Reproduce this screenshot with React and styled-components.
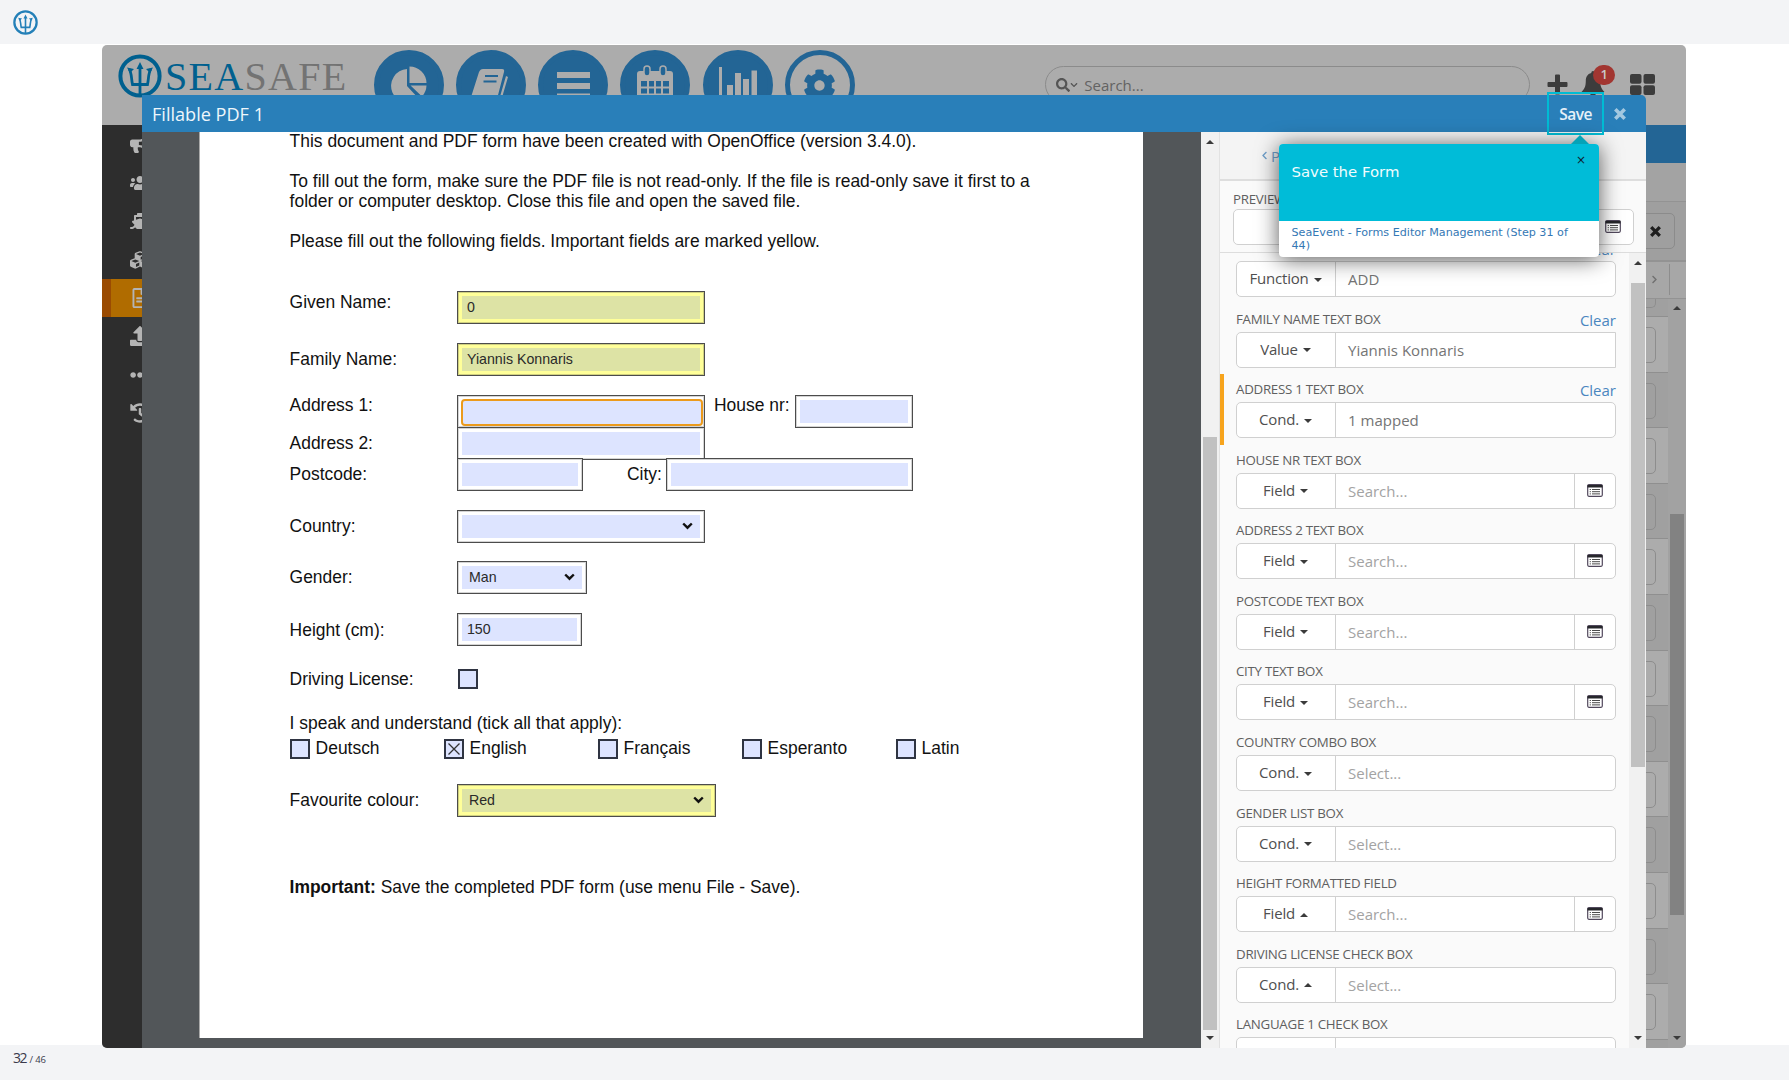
import React from "react";
import styled, { createGlobalStyle } from "styled-components";
import {
  FaBullhorn,
  FaChevronDown,
  FaChevronLeft,
  FaChevronRight,
  FaCog,
  FaCubes,
  FaEllipsisH,
  FaHistory,
  FaRegFileAlt,
  FaSearch,
  FaShip,
  FaUpload,
  FaUsers,
} from "react-icons/fa";

const GlobalStyle = createGlobalStyle`
  * {
    box-sizing: border-box;
  }
  body {
    margin: 0;
    background: #fff;
    font-family: "Open Sans", "Noto Sans", sans-serif;
  }
  p {
    margin: 0;
  }
  svg {
    display: block;
  }
`;

const Page = styled.div`
  display: flex;
  flex-direction: column;
  width: 1789px;
  height: 1080px;
  overflow: hidden;
`;
const TopBar = styled.header`
  flex: none;
  height: 44px;
  padding: 10px 13px;
  background: #f3f4f6;
`;
const BottomBar = styled.footer`
  flex: none;
  height: 35px;
  padding: 3px 13px;
  background: #f3f4f6;
  color: #3a3a4c;
  font-size: 14px;
  line-height: 20px;
  letter-spacing: -1.4px;
  small {
    margin-left: 1px;
    font-size: 9.5px;
    letter-spacing: -0.1px;
  }
`;
const Middle = styled.main`
  flex: none;
  height: 1001px;
  padding: 1px 103px 0 102px;
`;
const Stage = styled.div`
  position: relative;
  z-index: 1;
  height: 1003px;
  border-radius: 5px;
  overflow: hidden;
  background: #acacac;
`;

/* application behind the modal */
const AppHeader = styled.div`
  display: flex;
  height: 80px;
  padding: 5px 0 0 16px;
  overflow: hidden;
`;
const Logo = styled.div`
  display: flex;
  flex: none;
  width: 255.5px;
  padding-top: 4px;
  font-family: "Liberation Serif", serif;
  font-size: 40px;
  line-height: 46px;
  letter-spacing: 1.3px;
  color: #737373;
  span {
    color: #00608f;
  }
  svg {
    flex: none;
    margin-right: 3px;
  }
`;
const NavCircle = styled.div`
  display: flex;
  flex: none;
  align-items: center;
  justify-content: center;
  width: 70px;
  height: 70px;
  margin-right: 12.3px;
  border-radius: 50%;
  border: 5px solid #236595;
  background: ${props => (props.$active ? "#acacac" : "#236595")};
  color: ${props => (props.$active ? "#236595" : "#acacac")};
`;
const SearchBox = styled.div`
  display: flex;
  flex: none;
  align-items: center;
  width: 485px;
  height: 37px;
  margin: 16px 17px 0 178px;
  padding-left: 10px;
  border: 1.5px solid #8b8b8b;
  border-radius: 19px;
  color: #555;
  font-size: 15px;
  span {
    margin-left: 6px;
    color: #636363;
    letter-spacing: 0;
  }
`;
const HeaderIcons = styled.div`
  display: flex;
  align-items: flex-start;
  padding-top: 24px;
  color: #3c3c3c;
`;
const BellWrap = styled.div`
  position: relative;
  margin: -3px 25px 0 13px;
`;
const Badge = styled.span`
  position: absolute;
  top: -6px;
  left: 12px;
  width: 22px;
  height: 20px;
  border-radius: 10px;
  background: #a23631;
  color: #c9c9c9;
  font-size: 13px;
  font-weight: 600;
  line-height: 19px;
  text-align: center;
`;
const AppBody = styled.div`
  display: flex;
  height: 923px;
`;
const Sidebar = styled.div`
  flex: none;
  width: 67px;
  background: #2d2d2d;
`;
const SideItem = styled.div`
  display: flex;
  align-items: center;
  justify-content: center;
  height: 38.45px;
  border-left: 9px solid ${props => (props.$active ? "#9a4b02" : "#2d2d2d")};
  background: ${props => (props.$active ? "#b06c00" : "#2d2d2d")};
  color: #b4b4b4;
  font-size: 20px;
`;
const AppMain = styled.div`
  flex: 1;
  display: flex;
  flex-direction: column;
`;
const BlueBar = styled.div`
  flex: none;
  height: 38px;
  background: #236595;
`;
const ToolStrip = styled.div`
  flex: none;
  display: flex;
  justify-content: flex-end;
  height: ${props => props.$height}px;
  padding: ${props => props.$pad || "0"};
  border-bottom: ${props => props.$line || 1}px solid #939393;
  background: ${props => props.$bg};
  color: #1f1f1f;
`;
const ClearButton = styled.div`
  display: flex;
  align-items: center;
  justify-content: flex-end;
  width: 120px;
  height: 36px;
  padding-right: 13px;
  border: 1px solid #8b8b8b;
  border-radius: 5px;
`;
const NextCell = styled.div`
  display: flex;
  align-items: center;
  height: 31px;
  padding-right: 10px;
  border-right: 1px solid #8d8d8d;
  color: #707070;
`;
const ListArea = styled.div`
  flex: 1;
  display: flex;
  min-height: 0;
`;
const Rows = styled.div`
  flex: 1;
  overflow: hidden;
`;
const Row = styled.div`
  display: flex;
  justify-content: flex-end;
  height: ${props => props.$height || 55.6}px;
  padding: ${props => (props.$height ? "0" : "10px")} 12px 0 0;
  border-bottom: 1px solid #8f8f8f;
  background: ${props => (props.$odd ? "#a0a0a0" : "#acacac")};
`;
const RowButton = styled.div`
  width: 60px;
  height: ${props => (props.$cut ? 9 : 36)}px;
  border: 1px solid #8d8d8d;
  border-top-width: ${props => (props.$cut ? 0 : 1)}px;
  border-radius: ${props => (props.$cut ? "0 0 5px 5px" : "5px")};
`;

const ScrollBar = styled.div`
  flex: none;
  display: flex;
  flex-direction: column;
  align-items: center;
  width: ${props => props.$width}px;
  padding: ${props => props.$pad};
  background: ${props => props.$bg};
`;
const Thumb = styled.div`
  width: 14px;
  height: ${props => props.$height}px;
  margin: ${props => props.$before}px 0 auto;
  background: ${props => props.$color};
`;
const Arrow = styled.i`
  display: inline-block;
  width: 0;
  height: 0;
  border: 4px solid transparent;
  border-${props => (props.$up ? "bottom" : "top")}-color: #3b3b3b;
  border-${props => (props.$up ? "top" : "bottom")}-width: 0;
`;

/* modal */
const Modal = styled.div`
  position: absolute;
  top: 50px;
  left: 40px;
  display: flex;
  flex-direction: column;
  width: 1504px;
  height: 953px;
  border-top-right-radius: 5px;
  overflow: hidden;
`;
const ModalHeader = styled.div`
  flex: none;
  display: flex;
  align-items: center;
  justify-content: space-between;
  height: 37px;
  padding: 0 20px 0 10px;
  background: #297fb9;
  color: #eef6fb;
  line-height: 36px;
  h3 {
    margin: 0;
    font-size: 18.1px;
    font-weight: 400;
  }
`;
const HeaderActions = styled.div`
  display: flex;
  align-items: center;
  color: #a3c8e0;
  b {
    margin-right: 22px;
    color: #e6f1f8;
    font-size: 15.5px;
    font-weight: 600;
    letter-spacing: -0.5px;
  }
`;
const ModalBody = styled.div`
  flex: 1;
  display: flex;
  min-height: 0;
`;
const Viewer = styled.div`
  flex: none;
  width: 1059px;
  padding: 0 58px 10px 57px;
  background: #525659;
`;
const Sheet = styled.div`
  display: flex;
  flex-direction: column;
  height: 906px;
  padding-left: 89.6px;
  border-left: 1px solid #aaa;
  background: #fff;
  color: #111;
  font-family: "Liberation Sans", Arial, sans-serif;
  font-size: 17.44px;
  line-height: 20px;
`;
const Text = styled.p`
  flex: none;
  margin-top: ${props => props.$top}px;
  white-space: pre;
`;
const FormRow = styled.div`
  flex: none;
  display: flex;
  height: ${props => props.$height || 33}px;
  margin-top: ${props => props.$top}px;
`;
const Label = styled.div`
  flex: none;
  width: ${props => props.$width || 167.4}px;
  padding-top: ${props => props.$drop || 6}px;
  margin-left: ${props => props.$gap || 0}px;
`;
const Box = styled.div`
  flex: none;
  position: relative;
  width: ${props => props.$width}px;
  height: 33px;
  padding: 4px;
  border: 1px solid #4c4c4c;
  box-shadow: inset 0 0 0 1px ${props => (props.$required ? "#cfcf80" : "#d4d4d4")};
  background: ${props => (props.$required ? "#ffff99" : "#fff")};
`;
const Fill = styled.div`
  display: flex;
  align-items: center;
  justify-content: space-between;
  height: 23px;
  padding: 0 7px 1px ${props => props.$indent || 5}px;
  background: ${props => (props.$required ? "#dde3a5" : "#dde4ff")};
  outline: ${props => (props.$focus ? "2px solid #eb9a1c" : "none")};
  border-radius: ${props => (props.$focus ? 2 : 0)}px;
  transform: ${props => (props.$focus ? "translate(1px, 1px)" : "none")};
  color: #2a2a2a;
  font-size: 14.2px;
`;
const Languages = styled.div`
  flex: none;
  display: grid;
  grid-template-columns: 154px 154px 144px 154px 1fr;
  margin-top: 6px;
  line-height: 19px;
`;
const Check = styled.div`
  display: flex;
  gap: 6px;
`;
const Tick = styled.span`
  flex: none;
  width: 20px;
  height: 20px;
  border: 2px solid #2f3442;
  background: #dde4ff;
`;

/* mapping panel */
const Panel = styled.div`
  flex: 1;
  display: flex;
  flex-direction: column;
  min-width: 0;
  border-left: 1px solid #e2e2e2;
  background: #fafafa;
  overflow: hidden;
`;
const BackBar = styled.div`
  flex: none;
  display: flex;
  align-items: center;
  gap: 2px;
  height: 49px;
  padding-left: 40px;
  border-bottom: 2px solid #dedede;
  background: #f4f4f4;
  color: #6f9fca;
  font-size: 15px;
`;
const Preview = styled.div`
  flex: none;
  height: 72px;
  padding: 7px 12px 0 13px;
  border-bottom: 1px solid #ddd;
  background: #fafafa;
`;
const FieldLabel = styled.div`
  display: flex;
  justify-content: space-between;
  height: ${props => props.$height || 24}px;
  color: #606060;
  font-size: 13.3px;
  line-height: 22px;
  letter-spacing: -0.27px;
  text-transform: uppercase;
`;
const ClearLink = styled.span`
  color: #4a86bf;
  font-size: 15px;
  line-height: 24px;
  letter-spacing: 0;
  text-transform: none;
`;
const InputGroup = styled.div`
  display: flex;
  height: 36px;
  border: 1px solid #d0d0d0;
  border-radius: ${props => (props.$square ? "5px 0 0 5px" : "5px")};
  background: #fff;
  font-size: 15px;
`;
const Mode = styled.div`
  display: flex;
  flex: none;
  align-items: center;
  justify-content: center;
  gap: 5px;
  width: 99px;
  padding: 0 1px 2px 0;
  border-right: 1px solid #d0d0d0;
  color: #4f4f4f;
  letter-spacing: -0.2px;
  i {
    margin-top: 3px;
  }
`;
const Value = styled.div`
  flex: 1;
  padding-left: 12px;
  color: ${props => (props.$muted ? "#a3a3a3" : "#747474")};
  line-height: 34px;
  letter-spacing: ${props => (props.$muted ? "0" : "0.02px")};
`;
const Picker = styled.div`
  display: flex;
  flex: none;
  align-items: center;
  justify-content: center;
  width: 41px;
  padding-bottom: 1px;
  border-left: ${props => (props.$plain ? 0 : 1)}px solid #d0d0d0;
`;
const Mapping = styled.div`
  flex: 1;
  display: flex;
  min-height: 0;
`;
const MappingList = styled.div`
  flex: 1;
  overflow: hidden;
  > div:first-child {
    margin-top: -19.9px;
  }
`;
const Item = styled.div`
  height: 70.57px;
  padding: 4px 13px 0 12px;
  border-left: 4px solid ${props => (props.$active ? "#f7a41d" : "transparent")};
`;

/* guide step */
const Highlight = styled.div`
  position: absolute;
  top: 47px;
  left: 1445px;
  width: 57px;
  height: 43px;
  border: 2px solid #00bcd4;
`;
const Tip = styled.div`
  position: absolute;
  top: 99px;
  left: 1176.5px;
  width: 320.5px;
  border-radius: 4px;
  background: #fff;
  box-shadow: 0 2px 22px rgba(0, 0, 0, 0.65);
  font-family: "DejaVu Sans", sans-serif;
  &::before {
    content: "";
    position: absolute;
    top: -9px;
    right: 10px;
    border: 9px solid transparent;
    border-top-width: 0;
    border-bottom-color: #05a3b7;
  }
`;
const TipBody = styled.div`
  display: flex;
  justify-content: space-between;
  height: 77px;
  padding: 18px 13px 0 13px;
  border-radius: 4px 4px 0 0;
  background: #00bcd8;
  color: #f0fcfe;
  font-size: 14.9px;
  line-height: 20px;
  span {
    margin-top: -12px;
    color: #123;
    font-size: 12px;
  }
`;
const TipFooter = styled.div`
  height: 36px;
  padding: 5px 13px 0;
  color: #3478b5;
  font-size: 11.15px;
  line-height: 13px;
`;

const Trident = ({ size, color }) => (
  <svg width={size} height={size} viewBox="0 0 44 44" fill="none" stroke={color}>
    <circle cx="22" cy="22" r="19.6" strokeWidth="4" />
    <path d="M22 13v29M11 15c3 4 2 9 3.500 15.500h15C31 24 30 19 33 15" strokeWidth="2.800" />
    <path d="M22 8l-3.500 7h7zM9 13.500l7 1.500-4 4zM35 13.500L28 15l4 4z" fill={color} stroke="none" />
  </svg>
);

const PieIcon = () => (
  <svg width="40" height="40" viewBox="0 0 40 40" fill="currentColor">
    <path d="M18 4v17l12 13A17 17 0 1 1 18 4z" />
    <path d="M20.500 1.500A17 17 0 0 1 37.500 18h-17zM21.500 20.500h16a17 17 0 0 1-4.500 11z" />
  </svg>
);
const BookIcon = () => (
  <svg width="40" height="38" viewBox="0 0 40 38" fill="currentColor">
    <path d="M12 3h19c2 0 2.500 1 2 3l-7 27H4c-3 0-4-2-3-5L8 6c1-2 2-3 4-3z" />
    <path d="M35 10l2 1-7 24-18 1 16-2z" />
    <path d="M14 10h13M12.500 15.500h13" stroke="#236595" strokeWidth="2" />
  </svg>
);
const BarsIcon = () => (
  <svg width="33" height="28" viewBox="0 0 33 28" fill="currentColor">
    <path d="M0 1h33v6H0zM0 12h33v6H0zM0 22.500h33V28H0z" />
  </svg>
);
const CalendarIcon = () => (
  <svg width="36" height="40" viewBox="0 0 36 40">
    <rect y="6" width="36" height="34" rx="3" fill="currentColor" />
    <path d="M4 16h28v20H4z" fill="#236595" />
    <path d="M11 15v21M18 15v21M25 15v21M3 22.500h30M3 29.500h30" stroke="currentColor" strokeWidth="2" />
    <rect x="7" y="1" width="6" height="10" rx="3" fill="#236595" stroke="currentColor" strokeWidth="1.500" />
    <rect x="23" y="1" width="6" height="10" rx="3" fill="#236595" stroke="currentColor" strokeWidth="1.500" />
  </svg>
);
const ChartIcon = () => (
  <svg width="40" height="40" viewBox="0 0 40 40" fill="currentColor">
    <path d="M1 2h3v33h35v3H1zM9 20h6v13H9zM17 8h6v25h-6zM25 14h6v19h-6zM33.500 5.500h5.500v27.500h-5.500z" />
  </svg>
);
const PlusIcon = () => (
  <svg width="21" height="21" viewBox="0 0 21 21" fill="currentColor">
    <path d="M8 1.500Q8 .5 9 .5h3q1 0 1 1V8h6.500q1 0 1 1v3q0 1-1 1H13v6.500q0 1-1 1H9q-1 0-1-1V13H1.500q-1 0-1-1V9q0-1 1-1H8z" />
  </svg>
);
const BellIcon = () => (
  <svg width="24" height="26" viewBox="0 0 24 26" fill="currentColor">
    <path d="M12 0c1 0 1.800.8 1.700 2 4 1 5.500 4 5.500 8 0 6 1.800 8.500 4.300 11H.5C3 18.500 4.800 16 4.800 10c0-4 1.500-7 5.500-8C10.200.8 11 0 12 0zM9 22h6c0 4-6 4-6 0z" />
  </svg>
);
const TilesIcon = () => (
  <svg width="25" height="21" viewBox="0 0 25 21" fill="currentColor">
    <rect width="11.500" height="9.800" rx="2" />
    <rect x="13.500" width="11.500" height="9.800" rx="2" />
    <rect y="11.200" width="11.500" height="9.800" rx="2" />
    <rect x="13.500" y="11.200" width="11.500" height="9.800" rx="2" />
  </svg>
);
const CrossIcon = ({ size }) => (
  <svg width={size} height={size} viewBox="0 0 12 12" stroke="currentColor" strokeWidth="3.600">
    <path d="M1.300 1.300l9.400 9.400M10.700 1.300l-9.400 9.400" />
  </svg>
);
const ListIcon = () => (
  <svg width="16" height="13" viewBox="0 0 16 13">
    <rect x="0.700" y="0.700" width="14.600" height="11.600" rx="1.200" fill="#fff" stroke="#51485c" strokeWidth="1.200" />
    <path d="M0.500 1h15v2.500h-15z" fill="#26262b" />
    <path d="M5 5.500h8M5 7.700h8M5 9.900h8" stroke="#4a4a4a" />
    <path d="M2.700 5.500h1.200M2.700 7.700h1.200M2.700 9.900h1.200" stroke="#4a4a4a" />
  </svg>
);
const Caret = () => (
  <svg width="11" height="8" viewBox="0 0 11 8" fill="none" stroke="#111" strokeWidth="2.400">
    <path d="M1.200 1.500l4.300 4.200 4.300-4.200" />
  </svg>
);

const sideIcons = [FaBullhorn, FaUsers, FaShip, FaCubes, FaRegFileAlt, FaUpload, FaEllipsisH, FaHistory];

const languages = ["Deutsch", "English", "Français", "Esperanto", "Latin"];

const mappings = [
  { label: "Given Name Text Box", mode: "Function", value: "ADD", clear: true },
  { label: "Family Name Text Box", mode: "Value", value: "Yiannis Konnaris", clear: true },
  { label: "Address 1 Text Box", mode: "Cond.", value: "1 mapped", clear: true, active: true },
  { label: "House nr Text Box", mode: "Field" },
  { label: "Address 2 Text Box", mode: "Field" },
  { label: "Postcode Text Box", mode: "Field" },
  { label: "City Text Box", mode: "Field" },
  { label: "Country Combo Box", mode: "Cond." },
  { label: "Gender List Box", mode: "Cond." },
  { label: "Height Formatted Field", mode: "Field", up: true },
  { label: "Driving License Check Box", mode: "Cond.", up: true },
  { label: "Language 1 Check Box", mode: "", up: true },
];

const Field = ({ width, value, required, select, focus }) => (
  <Box $width={width} $required={required}>
    <Fill $required={required} $focus={focus} $indent={select ? 7 : 5}>
      <span>{value}</span>
      {select && <Caret />}
    </Fill>
  </Box>
);

const PdfForm = () => (
  <Sheet>
    <Text $top={-1}>This document and PDF form have been created with OpenOffice (version 3.4.0).</Text>
    <Text $top={20}>
      {"To fill out the form, make sure the PDF file is not read-only. If the file is read-only save it first to a\nfolder or computer desktop. Close this file and open the saved file."}
    </Text>
    <Text $top={20}>Please fill out the following fields. Important fields are marked yellow.</Text>
    <FormRow $top={40}>
      <Label $drop={1}>Given Name:</Label>
      <Field width={248} value="0" required />
    </FormRow>
    <FormRow $top={19}>
      <Label $drop={6}>Family Name:</Label>
      <Field width={248} value="Yiannis Konnaris" required />
    </FormRow>
    <FormRow $top={19}>
      <Label $drop={0.4}>Address 1:</Label>
      <Field width={248} focus />
      <Label $drop={0.4} $gap={9} $width={81}>House nr:</Label>
      <Field width={118} />
    </FormRow>
    <FormRow $top={-1}>
      <Label>Address 2:</Label>
      <Field width={248} />
    </FormRow>
    <FormRow $top={-2}>
      <Label $drop={6.4}>Postcode:</Label>
      <Field width={126} />
      <Label $drop={6.4} $gap={44} $width={39}>City:</Label>
      <Field width={247} />
    </FormRow>
    <FormRow $top={19}>
      <Label $drop={6}>Country:</Label>
      <Field width={248} select />
    </FormRow>
    <FormRow $top={18}>
      <Label>Gender:</Label>
      <Field width={130} value="Man" select />
    </FormRow>
    <FormRow $top={19}>
      <Label $drop={7}>Height (cm):</Label>
      <Field width={125} value="150" />
    </FormRow>
    <FormRow $top={23} $height={19}>
      <Label $width={168.4} $drop={0.1}>Driving License:</Label>
      <Tick />
    </FormRow>
    <Text $top={25}>I speak and understand (tick all that apply):</Text>
    <Languages>
      {languages.map(name => (
        <Check key={name}>
          <Tick>
            {name === "English" && (
              <svg width="16" height="16" viewBox="0 0 16 16" stroke="#333" strokeWidth="1.300">
                <path d="M2.500 2.500l11 11M13.500 2.500l-11 11" />
              </svg>
            )}
          </Tick>
          {name}
        </Check>
      ))}
    </Languages>
    <FormRow $top={25}>
      <Label>Favourite colour:</Label>
      <Field width={259} value="Red" required select />
    </FormRow>
    <Text $top={60}>
      <b>Important:</b> Save the completed PDF form (use menu File - Save).
    </Text>
  </Sheet>
);

const MappingItem = ({ item }) => (
  <Item $active={item.active}>
    <FieldLabel>
      {item.label}
      {item.clear && <ClearLink>Clear</ClearLink>}
    </FieldLabel>
    <InputGroup $square={item.mode === "Value"}>
      <Mode>
        {item.mode}
        {item.mode && <Arrow $up={item.up} />}
      </Mode>
      <Value $muted={!item.value}>
        {item.value || (item.mode === "Field" && "Search...") || (item.mode && "Select...")}
      </Value>
      {item.mode === "Field" && (
        <Picker>
          <ListIcon />
        </Picker>
      )}
    </InputGroup>
  </Item>
);

const Background = () => (
  <>
    <AppHeader>
      <Logo>
        <Trident size={44} color="#00608f" />
        <div>
          <span>SEA</span>SAFE
        </div>
      </Logo>
      <NavCircle><PieIcon /></NavCircle>
      <NavCircle><BookIcon /></NavCircle>
      <NavCircle><BarsIcon /></NavCircle>
      <NavCircle><CalendarIcon /></NavCircle>
      <NavCircle><ChartIcon /></NavCircle>
      <NavCircle $active><FaCog size={33} /></NavCircle>
      <SearchBox>
        <FaSearch size={14} />
        <FaChevronDown size={8} />
        <span>Search...</span>
      </SearchBox>
      <HeaderIcons>
        <PlusIcon />
        <BellWrap>
          <BellIcon />
          <Badge>1</Badge>
        </BellWrap>
        <TilesIcon />
      </HeaderIcons>
    </AppHeader>
    <AppBody>
      <Sidebar>
        {sideIcons.map((Icon, i) => (
          <SideItem key={i} $active={i === 4}>
            <Icon />
          </SideItem>
        ))}
      </Sidebar>
      <AppMain>
        <BlueBar />
        <ToolStrip $height={39} $bg="#a3a3a3" />
        <ToolStrip $height={60} $bg="#9f9f9f" $pad="11px 11px 0 0" $line={2}>
          <ClearButton>
            <CrossIcon size={11} />
          </ClearButton>
        </ToolStrip>
        <ToolStrip $height={37} $bg="#a7a7a7" $pad="2px 16px 0 0">
          <NextCell>
            <FaChevronRight size={9} />
          </NextCell>
        </ToolStrip>
        <ListArea>
          <Rows>
            <Row $height={18} $odd>
              <RowButton $cut />
            </Row>
            {Array.from({ length: 14 }, (_, i) => (
              <Row key={i} $odd={i % 2 === 1}>
                <RowButton />
              </Row>
            ))}
          </Rows>
          <ScrollBar $width={18} $pad="7px 0 8px" $bg="#a2a2a2">
            <Arrow $up />
            <Thumb $height={401} $before={204} $color="#828282" />
            <Arrow />
          </ScrollBar>
        </ListArea>
      </AppMain>
    </AppBody>
  </>
);

const App = () => (
  <>
    <GlobalStyle />
    <Page>
      <TopBar>
        <Trident size={25} color="#2480b8" />
      </TopBar>
      <Middle>
        <Stage>
          <Background />
          <Modal>
            <ModalHeader>
              <h3>Fillable PDF 1</h3>
              <HeaderActions>
                <b>Save</b>
                <CrossIcon size={12} />
              </HeaderActions>
            </ModalHeader>
            <ModalBody>
              <Viewer>
                <PdfForm />
              </Viewer>
              <ScrollBar $width={18} $pad="8px 0 8px" $bg="#f1f1f1">
                <Arrow $up />
                <Thumb $height={593} $before={293} $color="#c1c1c1" />
                <Arrow />
              </ScrollBar>
              <Panel>
                <BackBar>
                  <FaChevronLeft size={9} />
                  Previous
                </BackBar>
                <Preview>
                  <FieldLabel $height={21}>Preview</FieldLabel>
                  <InputGroup>
                    <Value />
                    <Picker $plain>
                      <ListIcon />
                    </Picker>
                  </InputGroup>
                </Preview>
                <Mapping>
                  <MappingList>
                    {mappings.map(item => (
                      <MappingItem key={item.label} item={item} />
                    ))}
                  </MappingList>
                  <ScrollBar $width={17} $pad="8px 0 8px" $bg="#f1f1f1">
                    <Arrow $up />
                    <Thumb $height={484} $before={18} $color="#c1c1c1" />
                    <Arrow />
                  </ScrollBar>
                </Mapping>
              </Panel>
            </ModalBody>
          </Modal>
          <Highlight />
          <Tip>
            <TipBody>
              Save the Form
              <span>×</span>
            </TipBody>
            <TipFooter>SeaEvent - Forms Editor Management (Step 31 of 44)</TipFooter>
          </Tip>
        </Stage>
      </Middle>
      <BottomBar>
        32 <small>/ 46</small>
      </BottomBar>
    </Page>
  </>
);

export default App;
